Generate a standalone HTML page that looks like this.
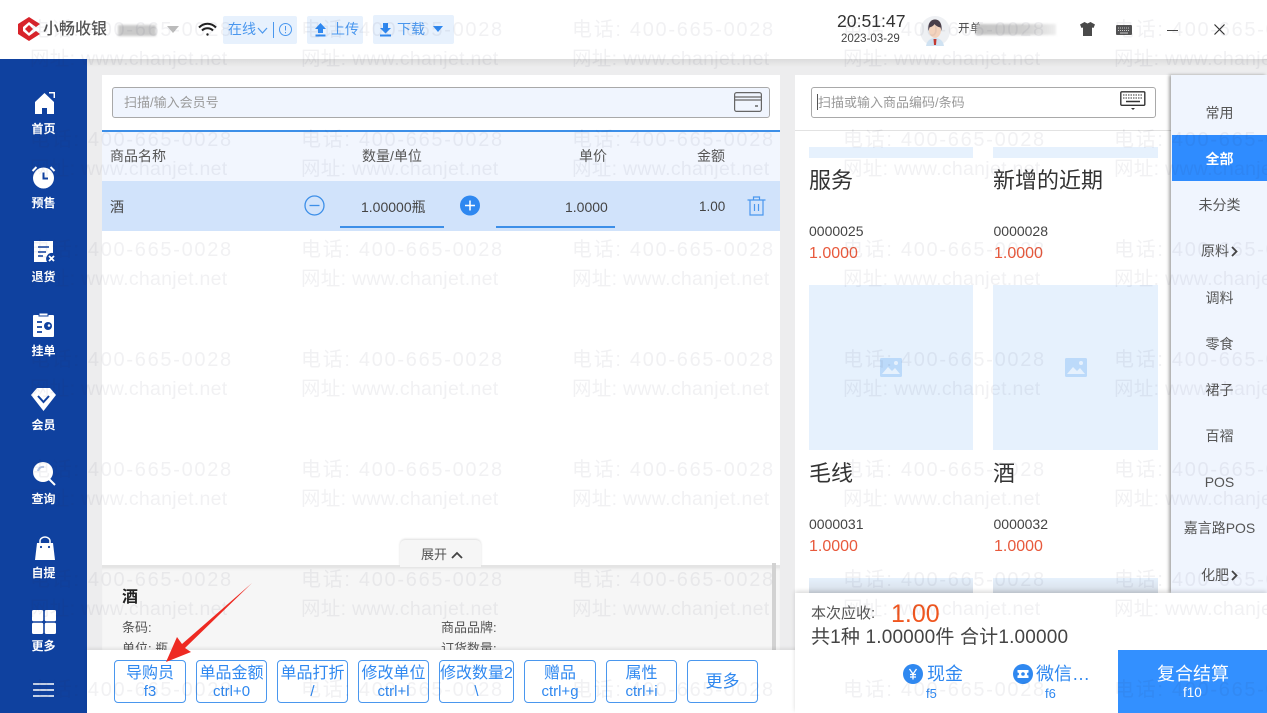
<!DOCTYPE html>
<html lang="zh"><head><meta charset="utf-8"><title>小畅收银</title>
<style>
html,body{margin:0;padding:0;width:1267px;height:713px;overflow:hidden;background:#fff}
body{position:relative;font-family:"Liberation Sans","Noto Sans CJK SC",sans-serif;color:#444}
.a{position:absolute}
.t{position:absolute;white-space:nowrap;line-height:1}
.nav{position:absolute;left:0;width:87px;text-align:center;color:#fff;font-size:12px;font-weight:700;line-height:14px}
.btn{position:absolute;top:660px;height:38px;border:1px solid #4a97ee;border-radius:4px;background:#fff;color:#2f88f0;text-align:center;font-size:16px;line-height:19px;padding-top:3px}
.btn span{display:block;font-size:15px;line-height:17px}
.cat{position:absolute;left:1172px;width:95px;text-align:center;font-size:14px;line-height:16px;color:#555}
.cat svg{margin-left:2px;vertical-align:-1px}
.wm{position:absolute;white-space:nowrap;color:rgba(40,50,70,.065);line-height:1;z-index:50;pointer-events:none}
.w1{font-size:20px;letter-spacing:1.7px}
.w2{font-size:19.5px;letter-spacing:.3px}
</style></head><body>

<!-- background bands -->
<div class="a" style="left:87px;top:59px;width:1180px;height:654px;background:#ededee"></div>
<div class="a" style="left:87px;top:59px;width:1180px;height:8px;background:linear-gradient(#dcdcdc,#ededee)"></div>

<!-- top bar -->
<div class="a" style="left:0;top:0;width:1267px;height:59px;background:#fff"></div>
<svg class="a" style="left:17px;top:16px" width="24" height="26" viewBox="0 0 24 26"><path d="M12 1 23 8 19 11 12 6 6 11V15L12 20 19 15 23 18 12 25 1 18V8Z" fill="#d8232a"/><path d="M12 9 16 13 12 17 8 13Z" fill="#d8232a"/></svg>
<div class="t" style="left:43px;top:22px;font-size:16px;font-weight:500;color:#555">小畅收银</div>
<div class="a" style="left:118px;top:25px;width:38px;height:11px;background:#c9c9c9;filter:blur(1px)"></div>
<div class="a" style="left:167px;top:26px;border:6px solid transparent;border-top:7px solid #bbb;border-bottom:0"></div>
<svg class="a" style="left:198px;top:22px" width="19" height="15" viewBox="0 0 19 15" fill="none" stroke="#222" stroke-width="2"><path d="M1 5.500C6 .5 13 .5 18 5.500M4 8.500C7 5.500 12 5.500 15 8.500"/><circle cx="9.500" cy="12.500" r="1.200" fill="#222" stroke="none"/></svg>

<div class="a" style="left:223px;top:16px;width:74px;height:28px;background:#e7f1fd;border-radius:2px"></div>
<div class="t" style="left:228px;top:22px;font-size:14px;color:#4a97ee">在线</div>
<svg class="a" style="left:256px;top:26px" width="13" height="9" viewBox="0 0 13 9" fill="none" stroke="#4a97ee" stroke-width="1.200"><path d="M2 2 6.500 7 11 2"/></svg>
<div class="a" style="left:273px;top:22px;width:1px;height:16px;background:#4a97ee"></div>
<svg class="a" style="left:278px;top:22px" width="15" height="15" viewBox="0 0 15 15" fill="none" stroke="#4a97ee"><circle cx="7.500" cy="7.500" r="6"/><path d="M7.500 4V8.500M7.500 10V11.200"/></svg>

<div class="a" style="left:307px;top:16px;width:56px;height:28px;background:#e7f1fd;border-radius:2px"></div>
<svg class="a" style="left:314px;top:23px" width="13" height="14" viewBox="0 0 13 14" fill="#2f88f0"><path d="M6.500 0 12 6H9V10H4V6H1ZM1.500 11.500H11.500V13.500H1.500Z"/></svg>
<div class="t" style="left:331px;top:22px;font-size:14px;color:#4a97ee">上传</div>

<div class="a" style="left:373px;top:15px;width:81px;height:29px;background:#e7f1fd;border-radius:2px"></div>
<svg class="a" style="left:379px;top:23px" width="13" height="14" viewBox="0 0 13 14" fill="#2f88f0"><path d="M4 0H9V5H12L6.500 10.500 1 5H4ZM1 11.500H12V13.500H1Z"/></svg>
<div class="t" style="left:397px;top:22px;font-size:14px;color:#4a97ee">下载</div>
<div class="a" style="left:433px;top:26px;border:5.500px solid transparent;border-top:6px solid #2f88f0;border-bottom:0"></div>

<div class="t" style="left:837px;top:13px;font-size:17.600px;color:#333">20:51:47</div>
<div class="t" style="left:841px;top:33.500px;font-size:11.500px;color:#444">2023-03-29</div>
<svg class="a" style="left:920px;top:16px" width="30" height="30" viewBox="0 0 30 30"><circle cx="15" cy="15" r="15" fill="#eef0f3"/><path d="M6 30C7 24 11 22 15 22S23 24 24 30Z" fill="#cfe2f2"/><path d="M13.500 23H16.500L16 29H14Z" fill="#c23a33"/><ellipse cx="15" cy="14" rx="6" ry="8" fill="#f4d3bd"/><path d="M8.500 15C7.500 7 11 3.500 15 3.500S22.500 7 21.500 15L20.500 11.500C18 11 15.500 9.500 14.500 8 13.500 10 11 11 9.500 11.500Z" fill="#4a3f4a"/></svg>
<div class="t" style="left:958px;top:24px;font-size:11.500px;color:#444">开</div>
<div class="t" style="left:970px;top:24px;font-size:11.500px;color:#444">单</div>
<div class="a" style="left:976px;top:24px;width:80px;height:11px;background:linear-gradient(90deg,#c4c4c4,#cfcfcf 60%,#eee);filter:blur(1px)"></div>
<svg class="a" style="left:1080px;top:22px" width="15" height="14" viewBox="0 0 15 14" fill="#4a4a4a"><path d="M4.500 0 7.500 1.500 10.500 0 15 2.500 13.500 6 12 5.500V14H3V5.500L1.500 6 0 2.500Z"/></svg>
<svg class="a" style="left:1116px;top:25px" width="16" height="10" viewBox="0 0 16 10"><rect width="16" height="10" rx="1" fill="#555"/><path d="M2 3H14M2 5.500H14" stroke="#ccc" stroke-dasharray="1 1"/><path d="M4 8H12" stroke="#ccc"/></svg>
<div class="a" style="left:1167px;top:29.500px;width:11px;height:1px;background:#444"></div>
<svg class="a" style="left:1214px;top:24px" width="11" height="11" viewBox="0 0 11 11" stroke="#333" stroke-width="1.200"><path d="M.5.500 10.500 10.500M10.500.5.500 10.500"/></svg>

<!-- sidebar -->
<div class="a" style="left:0;top:59px;width:87px;height:654px;background:#0f419f"></div>
<svg class="a" style="left:34px;top:92px" width="21" height="22" viewBox="0 0 21 22" fill="#fff"><path d="M10.500 1 20 10 20 22H13V16H8V22H1V10Z"/><path d="M15 .7H20.300V6" fill="none" stroke="#fff" stroke-width="1.500"/></svg>
<div class="nav" style="top:122px">首页</div>
<svg class="a" style="left:31px;top:165px" width="25" height="24" viewBox="0 0 25 24"><circle cx="12.500" cy="13" r="10.500" fill="#fff"/><path d="M12.500 7.500V13.500H17" fill="none" stroke="#0f419f" stroke-width="2"/><path d="M1.500 6 5.500 2M23.500 6 19.500 2" stroke="#fff" stroke-width="2"/></svg>
<div class="nav" style="top:196px">预售</div>
<svg class="a" style="left:33px;top:240px" width="24" height="24" viewBox="0 0 24 24"><path d="M1 1H20V13A6 6 0 0 0 14 22H1Z" fill="#fff"/><path d="M5 7H16M5 12H13M5 16H10" stroke="#0f419f" stroke-width="1.600"/><path d="M16 16 21 21M21 16 16 21" stroke="#fff" stroke-width="1.800"/></svg>
<div class="nav" style="top:270px">退货</div>
<svg class="a" style="left:33px;top:313px" width="22" height="24" viewBox="0 0 22 24"><rect y="2" width="21" height="22" rx="1" fill="#fff"/><rect x="6" width="9" height="3" fill="#fff" stroke="#0f419f"/><path d="M4 9H9M4 14H9M4 19H9" stroke="#0f419f" stroke-width="1.700"/><circle cx="15" cy="13" r="4" fill="#0f419f"/><circle cx="16" cy="12.500" r="1.300" fill="#fff"/></svg>
<div class="nav" style="top:344px">挂单</div>
<svg class="a" style="left:31px;top:388px" width="25" height="23" viewBox="0 0 25 23"><path d="M6 0H19L25 7 12.500 23 0 7Z" fill="#fff"/><path d="M7 8 12.500 14 18 8" fill="none" stroke="#0f419f" stroke-width="2"/></svg>
<div class="nav" style="top:418px">会员</div>
<svg class="a" style="left:33px;top:462px" width="23" height="24" viewBox="0 0 23 24"><circle cx="10" cy="10" r="10" fill="#fff"/><path d="M16 17 22 23" stroke="#fff" stroke-width="2"/><path d="M5 9A5 5 0 0 1 11 5" fill="none" stroke="#b8c8e6" stroke-width="2"/></svg>
<div class="nav" style="top:492px">查询</div>
<svg class="a" style="left:35px;top:536px" width="20" height="24" viewBox="0 0 20 24"><path d="M2 7H18L20 24H0Z" fill="#fff"/><path d="M5 7V5A5 4 0 0 1 15 5V7" fill="none" stroke="#fff" stroke-width="1.500"/><circle cx="6" cy="11" r="1.100" fill="#0f419f"/><circle cx="14" cy="11" r="1.100" fill="#0f419f"/></svg>
<div class="nav" style="top:566px">自提</div>
<svg class="a" style="left:32px;top:610px" width="24" height="24" viewBox="0 0 24 24" fill="#fff"><rect width="11.200" height="11.200" rx="1.500"/><rect x="12.800" width="11.200" height="11.200" rx="1.500"/><rect y="12.800" width="11.200" height="11.200" rx="1.500"/><rect x="12.800" y="12.800" width="11.200" height="11.200" rx="1.500"/></svg>
<div class="nav" style="top:639px">更多</div>
<svg class="a" style="left:33px;top:683px" width="21" height="14" viewBox="0 0 21 14" stroke="#fff" stroke-width="1.500"><path d="M0 1H21M0 7H21M0 13H21"/></svg>

<!-- left panel -->
<div class="a" style="left:102px;top:75px;width:678px;height:575px;background:#fff"></div>
<div class="a" style="left:112px;top:87px;width:656px;height:29px;background:#f0f5fe;border:1px solid #a9a9a9;border-radius:3px"></div>
<div class="t" style="left:124px;top:96px;font-size:13px;color:#9a9a9a">扫描/输入会员号</div>
<svg class="a" style="left:734px;top:92px" width="28" height="20" viewBox="0 0 28 20" fill="none" stroke="#666" stroke-width="1.200"><rect x=".6" y=".6" width="26.800" height="18.800" rx="2"/><path d="M1 5H27M1 8H27"/><path d="M21 14H24" stroke-width="1.500"/></svg>
<div class="a" style="left:102px;top:130px;width:678px;height:2px;background:#3d8fe8"></div>
<div class="a" style="left:102px;top:132px;width:678px;height:49px;background:#f2f6fe"></div>
<div class="t" style="left:110px;top:149px;font-size:14px;color:#555">商品名称</div>
<div class="t" style="left:362px;top:149px;font-size:14px;color:#555">数量/单位</div>
<div class="t" style="left:579px;top:149px;font-size:14px;color:#555">单价</div>
<div class="t" style="left:697px;top:149px;font-size:14px;color:#555">金额</div>
<div class="a" style="left:102px;top:181px;width:678px;height:50px;background:#d1e3fb"></div>
<div class="t" style="left:110px;top:200px;font-size:14px;color:#444">酒</div>
<svg class="a" style="left:304px;top:195px" width="21" height="21" viewBox="0 0 21 21" fill="none" stroke="#3d8fe8" stroke-width="1.300"><circle cx="10.500" cy="10.500" r="9.500"/><path d="M5.500 10.500H15.500"/></svg>
<div class="t" style="left:361px;top:200px;font-size:14px;color:#444">1.00000瓶</div>
<div class="a" style="left:340px;top:226px;width:104px;height:1.500px;background:#3d8fe8"></div>
<svg class="a" style="left:460px;top:195px" width="20" height="21" viewBox="0 0 20 21"><circle cx="10" cy="10.500" r="10" fill="#2f88f0"/><path d="M5 10.500H15M10 5.500V15.500" stroke="#fff" stroke-width="1.500"/></svg>
<div class="t" style="left:565px;top:200px;font-size:14px;color:#444">1.0000</div>
<div class="a" style="left:496px;top:226px;width:119px;height:1.500px;background:#3d8fe8"></div>
<div class="t" style="left:699px;top:200px;font-size:13.500px;color:#444">1.00</div>
<svg class="a" style="left:747px;top:196px" width="19" height="20" viewBox="0 0 19 20" fill="none" stroke="#4a97ee" stroke-width="1.200"><path d="M.5 4H18.500M6.500 4V1H12.500V4M3 4V19H16V4M7.500 8V15M11.500 8V15"/></svg>

<!-- detail drawer -->
<div class="a" style="left:102px;top:565px;width:678px;height:90px;background:#f6f6f6;border-top:2px solid #e4e4e4;box-sizing:border-box;box-shadow:inset 0 3px 3px -2px #ddd"></div>
<div class="a" style="left:772px;top:563px;width:4px;height:90px;background:#d2d2d2"></div>
<div class="a" style="left:400px;top:540px;width:81px;height:27px;background:#f6f6f6;border-radius:5px 5px 0 0;box-shadow:0 -1px 2px #ddd"></div>
<div class="t" style="left:421px;top:548px;font-size:13px;color:#555">展开</div>
<svg class="a" style="left:451px;top:551px" width="12" height="9" viewBox="0 0 12 9" fill="none" stroke="#444" stroke-width="1.800"><path d="M1 7 6 2 11 7"/></svg>
<div class="t" style="left:122px;top:590px;font-size:16px;font-weight:700;color:#222">酒</div>
<div class="t" style="left:122px;top:621px;font-size:13px;color:#555">条码:</div>
<div class="t" style="left:441px;top:621px;font-size:13px;color:#555">商品品牌:</div>
<div class="t" style="left:122px;top:642px;font-size:13px;color:#555">单位: 瓶</div>
<div class="t" style="left:441px;top:642px;font-size:13px;color:#555">订货数量:</div>

<!-- toolbar -->
<div class="a" style="left:87px;top:650px;width:1031px;height:63px;background:#fff;box-shadow:0 -2px 3px rgba(0,0,0,.08)"></div>
<div class="btn" style="left:114px;width:70px">导购员<span>f3</span></div>
<div class="btn" style="left:196px;width:69px">单品金额<span>ctrl+0</span></div>
<div class="btn" style="left:277px;width:69px">单品打折<span>/</span></div>
<div class="btn" style="left:358px;width:69px">修改单位<span>ctrl+l</span></div>
<div class="btn" style="left:439px;width:73px">修改数量2<span>\</span></div>
<div class="btn" style="left:524px;width:70px">赠品<span>ctrl+g</span></div>
<div class="btn" style="left:606px;width:69px">属性<span>ctrl+i</span></div>
<div class="btn" style="left:687px;width:69px;line-height:35px;font-size:17px">更多</div>

<!-- arrow -->
<svg class="a" style="left:160px;top:578px;z-index:60" width="96" height="90" viewBox="0 0 96 90"><path d="M92 5 25 70 31 74 6 84 17 59 22 66Z" fill="#ee2a22"/></svg>

<!-- goods panel -->
<div class="a" style="left:795px;top:75px;width:376px;height:520px;background:#fff"></div>
<div class="a" style="left:811px;top:87px;width:343px;height:29px;background:#fff;border:1px solid #a9a9a9;border-radius:3px"></div>
<div class="a" style="left:817px;top:94px;width:1px;height:16px;background:#555"></div>
<div class="t" style="left:818px;top:96px;font-size:13px;color:#999">扫描或输入商品编码/条码</div>
<svg class="a" style="left:1120px;top:91px" width="26" height="20" viewBox="0 0 26 20" fill="none" stroke="#333"><rect x=".8" y=".8" width="24" height="13.500" rx="1" stroke-width="1.400"/><path d="M3 4H23M3 7H23" stroke-dasharray="1.500 1"/><path d="M6 10.500H20" stroke-width="1.500"/><path d="M11 17H15L13 19Z" fill="#333" stroke="none"/></svg>
<div class="a" style="left:795px;top:130px;width:376px;height:1px;background:#e2e2e2"></div>

<div class="a" style="left:809px;top:147px;width:164px;height:11px;background:#e6f1fd"></div>
<div class="a" style="left:993px;top:147px;width:165px;height:11px;background:#e6f1fd"></div>
<div class="t" style="left:809px;top:170px;font-size:22px;color:#333">服务</div>
<div class="t" style="left:993px;top:170px;font-size:22px;color:#333">新增的近期</div>
<div class="t" style="left:809px;top:224px;font-size:14px;color:#444">0000025</div>
<div class="t" style="left:993.500px;top:224px;font-size:14px;color:#444">0000028</div>
<div class="t" style="left:809px;top:246px;font-size:16px;color:#e8593c">1.0000</div>
<div class="t" style="left:994px;top:246px;font-size:16px;color:#e8593c">1.0000</div>

<div class="a" style="left:809px;top:285px;width:164px;height:165px;background:#e6f1fd"></div>
<div class="a" style="left:993px;top:285px;width:165px;height:165px;background:#e6f1fd"></div>
<svg class="a" style="left:880px;top:358px" width="22" height="19" viewBox="0 0 22 19"><rect width="22" height="19" rx="1.500" fill="#bcdafa"/><path d="M2 16 8 9 12 13 15 10 20 16Z" fill="#e6f1fd"/><circle cx="16" cy="5" r="2" fill="#e6f1fd"/></svg>
<svg class="a" style="left:1065px;top:358px" width="22" height="19" viewBox="0 0 22 19"><rect width="22" height="19" rx="1.500" fill="#bcdafa"/><path d="M2 16 8 9 12 13 15 10 20 16Z" fill="#e6f1fd"/><circle cx="16" cy="5" r="2" fill="#e6f1fd"/></svg>

<div class="t" style="left:809px;top:463px;font-size:22px;color:#333">毛线</div>
<div class="t" style="left:993px;top:463px;font-size:22px;color:#333">酒</div>
<div class="t" style="left:809px;top:517px;font-size:14px;color:#444">0000031</div>
<div class="t" style="left:993.500px;top:517px;font-size:14px;color:#444">0000032</div>
<div class="t" style="left:809px;top:539px;font-size:16px;color:#e8593c">1.0000</div>
<div class="t" style="left:994px;top:539px;font-size:16px;color:#e8593c">1.0000</div>
<div class="a" style="left:809px;top:578px;width:164px;height:15px;background:linear-gradient(#e6f1fd,#d6dde6)"></div>
<div class="a" style="left:993px;top:578px;width:165px;height:15px;background:linear-gradient(#e6f1fd,#d6dde6)"></div>

<!-- categories -->
<div class="a" style="left:1171px;top:75px;width:96px;height:518px;background:#f0f5fe;box-shadow:-2px 0 3px rgba(0,0,0,.35)"></div>
<div class="cat" style="top:105px">常用</div>
<div class="a" style="left:1172px;top:135px;width:95px;height:46px;background:#2f8cff"></div>
<div class="cat" style="top:151px;color:#fff;font-weight:700">全部</div>
<div class="cat" style="top:197px">未分类</div>
<div class="cat" style="top:243px">原料<svg width="7" height="11" viewBox="0 0 7 11" fill="none" stroke="#444" stroke-width="1.800"><path d="M1 1 5.500 5.500 1 10"/></svg></div>
<div class="cat" style="top:290px">调料</div>
<div class="cat" style="top:336px">零食</div>
<div class="cat" style="top:382px">裙子</div>
<div class="cat" style="top:428px">百褶</div>
<div class="cat" style="top:474px">POS</div>
<div class="cat" style="top:520px">嘉言路POS</div>
<div class="cat" style="top:567px">化肥<svg width="7" height="11" viewBox="0 0 7 11" fill="none" stroke="#444" stroke-width="1.800"><path d="M1 1 5.500 5.500 1 10"/></svg></div>

<!-- totals -->
<div class="a" style="left:795px;top:593px;width:472px;height:120px;background:#fff;box-shadow:0 -2px 4px rgba(0,0,0,.14)"></div>
<div class="t" style="left:811px;top:606px;font-size:15px;color:#555">本次应收:</div>
<div class="t" style="left:891px;top:602px;font-size:25px;color:#f0561f">1.00</div>
<div class="t" style="left:811px;top:628px;font-size:19px;color:#444;letter-spacing:.17px">共1种 1.00000件 合计1.00000</div>

<svg class="a" style="left:903px;top:664px" width="20" height="20" viewBox="0 0 20 20"><circle cx="10" cy="10" r="10" fill="#2f88f0"/><path d="M6.500 5 10 10 13.500 5M10 10V15.500M7 10.500H13M7 13H13" fill="none" stroke="#fff" stroke-width="1.300"/></svg>
<div class="t" style="left:927px;top:665px;font-size:18px;color:#2f88f0">现金</div>
<div class="t" style="left:926px;top:687px;font-size:13px;color:#2f88f0">f5</div>
<svg class="a" style="left:1013px;top:664px" width="20" height="20" viewBox="0 0 20 20"><circle cx="10" cy="10" r="10" fill="#2f88f0"/><path d="M4.500 6H15.500V8.500A1.500 1.500 0 0 0 15.500 11.500V14H4.500V11.500A1.500 1.500 0 0 0 4.500 8.500Z" fill="#fff"/><circle cx="10" cy="10" r="1.800" fill="#2f88f0"/></svg>
<div class="t" style="left:1036px;top:665px;font-size:18px;color:#2f88f0">微信…</div>
<div class="t" style="left:1045px;top:687px;font-size:13px;color:#2f88f0">f6</div>

<div class="a" style="left:1118px;top:650px;width:149px;height:63px;background:#3390ff"></div>
<div class="t" style="left:1157px;top:665px;font-size:18px;color:#fff">复合结算</div>
<div class="t" style="left:1183px;top:686px;font-size:13.500px;color:#fff">f10</div>

<!-- watermark -->
<div class="wm w1" style="left:30px;top:20px">电话: 400-665-0028</div><div class="wm w1" style="left:301px;top:20px">电话: 400-665-0028</div><div class="wm w1" style="left:572px;top:20px">电话: 400-665-0028</div><div class="wm w1" style="left:843px;top:20px">电话: 400-665-0028</div><div class="wm w1" style="left:1114px;top:20px">电话: 400-665-0028</div>
<div class="wm w2" style="left:30px;top:50px">网址: www.chanjet.net</div><div class="wm w2" style="left:301px;top:50px">网址: www.chanjet.net</div><div class="wm w2" style="left:572px;top:50px">网址: www.chanjet.net</div><div class="wm w2" style="left:843px;top:50px">网址: www.chanjet.net</div><div class="wm w2" style="left:1114px;top:50px">网址: www.chanjet.net</div>
<div class="wm w1" style="left:30px;top:130px">电话: 400-665-0028</div><div class="wm w1" style="left:301px;top:130px">电话: 400-665-0028</div><div class="wm w1" style="left:572px;top:130px">电话: 400-665-0028</div><div class="wm w1" style="left:843px;top:130px">电话: 400-665-0028</div><div class="wm w1" style="left:1114px;top:130px">电话: 400-665-0028</div>
<div class="wm w2" style="left:30px;top:160px">网址: www.chanjet.net</div><div class="wm w2" style="left:301px;top:160px">网址: www.chanjet.net</div><div class="wm w2" style="left:572px;top:160px">网址: www.chanjet.net</div><div class="wm w2" style="left:843px;top:160px">网址: www.chanjet.net</div><div class="wm w2" style="left:1114px;top:160px">网址: www.chanjet.net</div>
<div class="wm w1" style="left:30px;top:240px">电话: 400-665-0028</div><div class="wm w1" style="left:301px;top:240px">电话: 400-665-0028</div><div class="wm w1" style="left:572px;top:240px">电话: 400-665-0028</div><div class="wm w1" style="left:843px;top:240px">电话: 400-665-0028</div><div class="wm w1" style="left:1114px;top:240px">电话: 400-665-0028</div>
<div class="wm w2" style="left:30px;top:270px">网址: www.chanjet.net</div><div class="wm w2" style="left:301px;top:270px">网址: www.chanjet.net</div><div class="wm w2" style="left:572px;top:270px">网址: www.chanjet.net</div><div class="wm w2" style="left:843px;top:270px">网址: www.chanjet.net</div><div class="wm w2" style="left:1114px;top:270px">网址: www.chanjet.net</div>
<div class="wm w1" style="left:30px;top:350px">电话: 400-665-0028</div><div class="wm w1" style="left:301px;top:350px">电话: 400-665-0028</div><div class="wm w1" style="left:572px;top:350px">电话: 400-665-0028</div><div class="wm w1" style="left:843px;top:350px">电话: 400-665-0028</div><div class="wm w1" style="left:1114px;top:350px">电话: 400-665-0028</div>
<div class="wm w2" style="left:30px;top:380px">网址: www.chanjet.net</div><div class="wm w2" style="left:301px;top:380px">网址: www.chanjet.net</div><div class="wm w2" style="left:572px;top:380px">网址: www.chanjet.net</div><div class="wm w2" style="left:843px;top:380px">网址: www.chanjet.net</div><div class="wm w2" style="left:1114px;top:380px">网址: www.chanjet.net</div>
<div class="wm w1" style="left:30px;top:460px">电话: 400-665-0028</div><div class="wm w1" style="left:301px;top:460px">电话: 400-665-0028</div><div class="wm w1" style="left:572px;top:460px">电话: 400-665-0028</div><div class="wm w1" style="left:843px;top:460px">电话: 400-665-0028</div><div class="wm w1" style="left:1114px;top:460px">电话: 400-665-0028</div>
<div class="wm w2" style="left:30px;top:490px">网址: www.chanjet.net</div><div class="wm w2" style="left:301px;top:490px">网址: www.chanjet.net</div><div class="wm w2" style="left:572px;top:490px">网址: www.chanjet.net</div><div class="wm w2" style="left:843px;top:490px">网址: www.chanjet.net</div><div class="wm w2" style="left:1114px;top:490px">网址: www.chanjet.net</div>
<div class="wm w1" style="left:30px;top:570px">电话: 400-665-0028</div><div class="wm w1" style="left:301px;top:570px">电话: 400-665-0028</div><div class="wm w1" style="left:572px;top:570px">电话: 400-665-0028</div><div class="wm w1" style="left:843px;top:570px">电话: 400-665-0028</div><div class="wm w1" style="left:1114px;top:570px">电话: 400-665-0028</div>
<div class="wm w2" style="left:30px;top:600px">网址: www.chanjet.net</div><div class="wm w2" style="left:301px;top:600px">网址: www.chanjet.net</div><div class="wm w2" style="left:572px;top:600px">网址: www.chanjet.net</div><div class="wm w2" style="left:843px;top:600px">网址: www.chanjet.net</div><div class="wm w2" style="left:1114px;top:600px">网址: www.chanjet.net</div>
<div class="wm w1" style="left:30px;top:680px">电话: 400-665-0028</div><div class="wm w1" style="left:301px;top:680px">电话: 400-665-0028</div><div class="wm w1" style="left:572px;top:680px">电话: 400-665-0028</div><div class="wm w1" style="left:843px;top:680px">电话: 400-665-0028</div><div class="wm w1" style="left:1114px;top:680px">电话: 400-665-0028</div>
</body></html>
